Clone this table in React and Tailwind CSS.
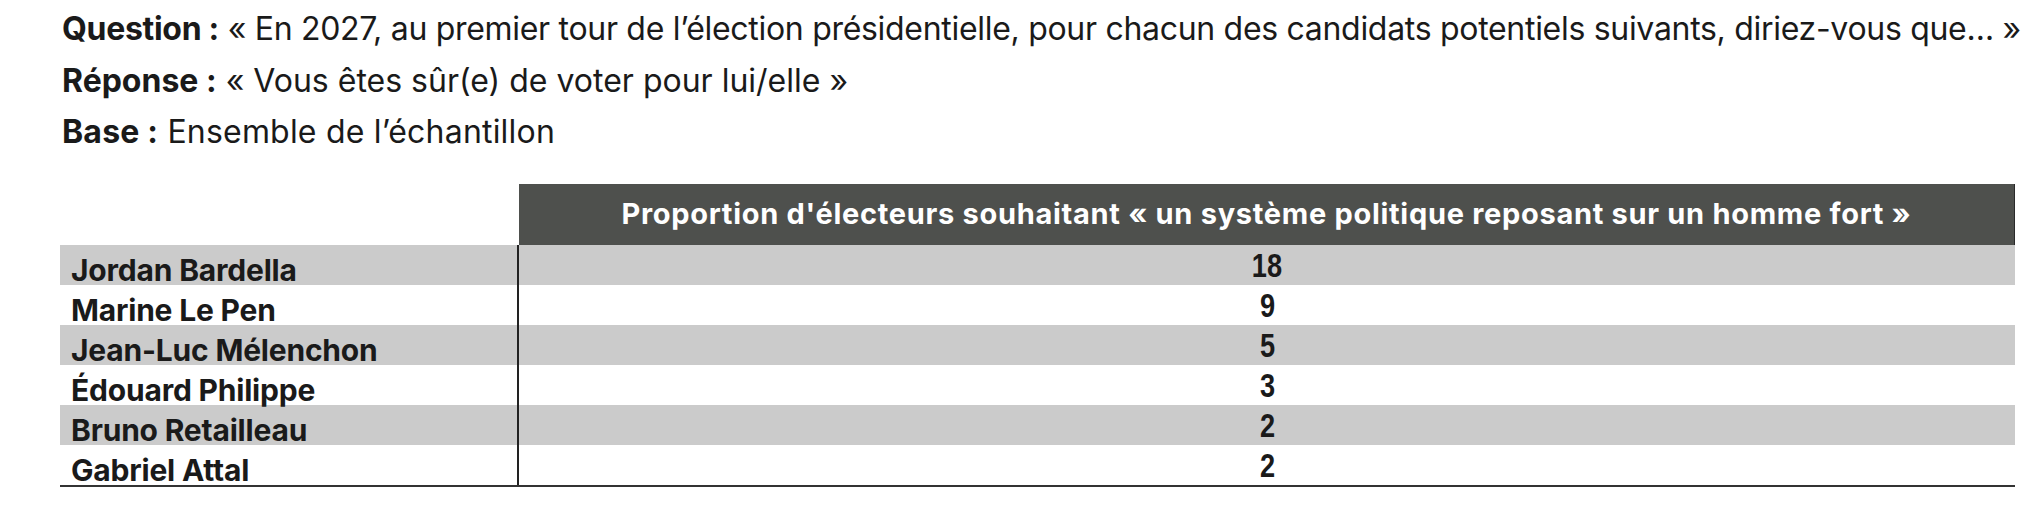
import React from 'react';

const rows = [
  { name: 'Jordan Bardella', value: 18 },
  { name: 'Marine Le Pen', value: 9 },
  { name: 'Jean-Luc Mélenchon', value: 5 },
  { name: 'Édouard Philippe', value: 3 },
  { name: 'Bruno Retailleau', value: 2 },
  { name: 'Gabriel Attal', value: 2 },
];

const App = () => {
  return (
    <div className="w-[2038px] h-[512px] bg-white text-[#1a1a1a] font-['Inter',sans-serif] overflow-hidden">
      <div className="pl-[62px] pt-[3px] text-[32px] leading-[51.5px] tracking-[-0.3px]">
        <div>
          <span className="font-bold">Question :</span> « En 2027, au premier tour de l’élection présidentielle, pour chacun des candidats potentiels suivants, diriez-vous que… »
        </div>
        <div className="tracking-[0px]">
          <span className="font-bold">Réponse :</span> « Vous êtes sûr(e) de voter pour lui/elle »
        </div>
        <div className="tracking-[0.2px]">
          <span className="font-bold">Base :</span> Ensemble de l’échantillon
        </div>
      </div>

      <div className="ml-[60px] mt-[26px] w-[1955px]">
        <div className="grid grid-cols-[459px_1fr]">
          <div className="h-[61px]"></div>
          <div className="h-[61px] bg-[#4e504d] border-r border-[#2a2a2a] flex items-center justify-center">
            <span className="text-white font-bold text-[29px] tracking-[0.7px]">
              Proportion d'électeurs souhaitant « un système politique reposant sur un homme fort »
            </span>
          </div>
        </div>

        <div className="border-b-2 border-[#333]">
          {rows.map((row, index) => (
            <div
              key={row.name}
              className={`grid grid-cols-[459px_1fr] h-[40px] ${index % 2 === 0 ? 'bg-[#cbcbcb]' : 'bg-white'}`}
            >
              <div className="flex items-end pl-[11px] border-r-2 border-[#222]">
                <span className="font-bold text-[30px] leading-[30px] tracking-[-0.2px]">{row.name}</span>
              </div>
              <div className="flex items-center justify-center">
                <span className="inline-block scale-x-[0.8] font-['Liberation_Sans',sans-serif] font-bold text-[34px] leading-none">
                  {row.value}
                </span>
              </div>
            </div>
          ))}
        </div>
      </div>
    </div>
  );
};

export default App;
